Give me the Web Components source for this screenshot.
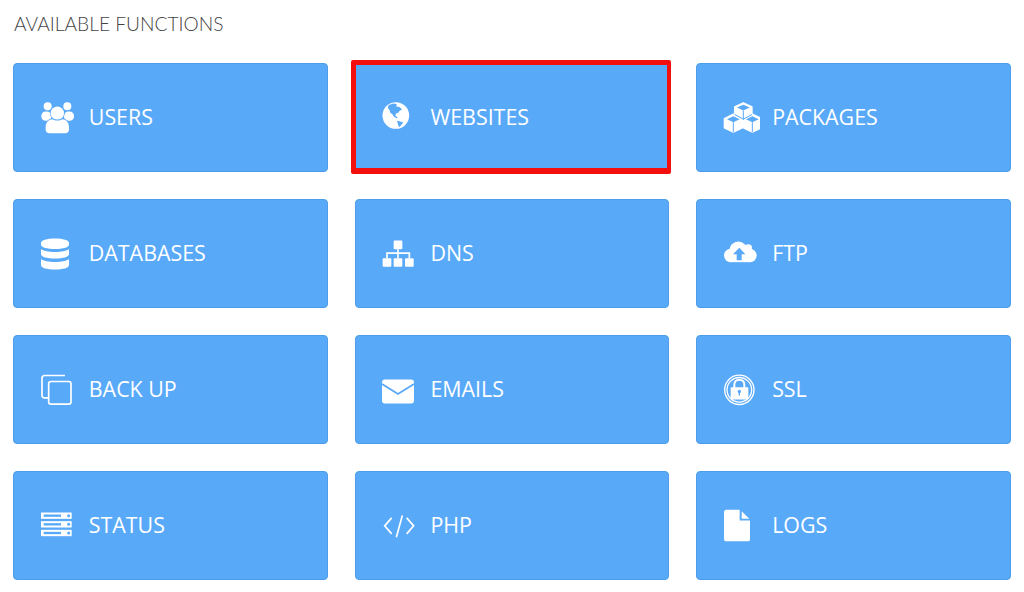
<!DOCTYPE html>
<html lang="en">
<head>
<meta charset="utf-8">
<title>Available functions</title>
<style>
  body { margin: 0; background: #fff; }
  svg { display: block; width: 40px; height: 40px; }
</style>
</head>
<body>
<panel-funciones titulo="AVAILABLE FUNCTIONS"></panel-funciones>
<script>
// Panel with the section heading and the three-column grid
class PanelFunciones extends HTMLElement {
  constructor() {
    super();
    this.attachShadow({ mode: 'open' });
    this.shadowRoot.innerHTML = `
      <style>
        :host { display: block; padding: 14px 13px 0; font-family: "Open Sans", sans-serif; }
        h2 {
          margin: 0 0 29px 1px;
          font: 300 19.2px/20px Lato, sans-serif;
          color: #444;
        }
        .rejilla { display: grid; grid-template-columns: repeat(3, 1fr); gap: 27px; }
      </style>
      <h2></h2>
      <div class="rejilla"><slot></slot></div>`;
    this.shadowRoot.querySelector('h2').textContent = this.getAttribute('titulo');
  }
}

// One blue tile: icon on the left, label after it
class TarjetaFuncion extends HTMLElement {
  constructor() {
    super();
    this.attachShadow({ mode: 'open' });
    this.shadowRoot.innerHTML = `
      <style>
        :host {
          position: relative;
          display: flex;
          align-items: center;
          box-sizing: border-box;
          height: 109px;
          padding-left: 23px;
          background: #59a9f9;
          border: 1px solid #4e9ded;
          border-radius: 4px;
          color: #fff;
          font-size: 21.4px;
        }
        /* red annotation drawn over the tile edge */
        :host([marcado])::after {
          content: "";
          position: absolute;
          top: -4.5px; left: -4.7px; right: -2.7px; bottom: -3px;
          border: solid #f40f0f;
          border-width: 5px 4.5px 6px 5px;
          border-radius: 2px;
        }
        .icono { flex: none; width: 40px; height: 40px; margin-right: 11.8px; }
        .texto { position: relative; top: -1px; }
      </style>
      <div class="icono"><slot name="icono"></slot></div>
      <span class="texto"><slot></slot></span>`;
  }
}

customElements.define('panel-funciones', PanelFunciones);
customElements.define('tarjeta-funcion', TarjetaFuncion);

const iconos = {
  users: `<svg slot="icono" viewBox="36 22.5 120 120" fill="#fff">
    <circle cx="68" cy="47" r="12"/><circle cx="127" cy="47" r="12"/>
    <rect x="49" y="63" width="30" height="28" rx="13"/><rect x="117" y="63" width="30" height="28" rx="13"/>
    <g stroke="#59a9f9" stroke-width="4" paint-order="stroke">
      <circle cx="97" cy="68" r="20"/>
      <path d="M62 110c0-16 10-24 20-24 8 5 22 5 30 0 10 0 20 8 20 24v8c0 6-4 10-10 10H72c-6 0-10-4-10-10z"/>
    </g></svg>`,
  websites: `<svg slot="icono" viewBox="12 7.5 120 120">
    <circle cx="62.5" cy="60" r="40" fill="#fff"/>
    <path fill="#59a9f9" d="M40 30c5-3 11-6 18-6l8 3-3 5 12 3 6 8-7 3-4 6-7 2-2 7 7 5-3 2-8-4-5-8-6-4-2-8-5-6z"/>
    <path fill="#59a9f9" d="M66 76l10 2 9 3-7 8-6 6-3-8z"/>
    </svg>`,
  packages: `<svg slot="icono" viewBox="30 22.5 120 120">
    <g fill="#fff" stroke="#fff" stroke-width="4" stroke-linejoin="round">
      <path d="M100 37l26 12v28l-26 12-26-12V49z"/>
      <path d="M70 71l27 13v28l-27 13-27-13V84z"/>
      <path d="M127 71l27 13v28l-27 13-27-13V84z"/>
    </g>
    <g fill="#59a9f9">
      <path d="M100 43l19 8-19 9-19-9z"/>
      <path d="M70 77l19 9-19 9-19-9z"/>
      <path d="M127 77l19 9-19 9-19-9z"/>
    </g>
    <g fill="none" stroke="#59a9f9" stroke-width="3">
      <path d="M100 60v28M70 95v30M127 95v30"/>
      <path d="M74 72l26 14 26-14"/>
    </g></svg>`,
  databases: `<svg slot="icono" viewBox="0 0 40 40" fill="#fff">
    <path d="M4 9c0-3 6-4.500 14-4.500S32 6 32 9v1.500c0 3-6 4.500-14 4.500S4 13.500 4 10.500z"/>
    <path d="M4 15c2 2 8 3 14 3s12-1 14-3v5c0 3-6 4.500-14 4.500S4 23 4 20z"/>
    <path d="M4 25c2 2 8 3 14 3s12-1 14-3v6c0 3-6 4.500-14 4.500S4 34 4 31z"/>
    </svg>`,
  dns: `<svg slot="icono" viewBox="27 10.5 120 120" fill="#fff">
    <rect x="71" y="30" width="26" height="26" rx="3"/>
    <rect x="38" y="83" width="26" height="26" rx="3"/>
    <rect x="71" y="83" width="26" height="26" rx="3"/>
    <rect x="105" y="83" width="26" height="26" rx="3"/>
    <path fill="none" stroke="#fff" stroke-width="5" d="M84 56v27M51 83V68h67v15"/>
    </svg>`,
  ftp: `<svg slot="icono" viewBox="15 10.5 120 120">
    <g fill="#fff">
      <circle cx="47" cy="75" r="20"/>
      <circle cx="70" cy="60" r="27"/>
      <circle cx="100" cy="52" r="11"/>
      <circle cx="105" cy="75" r="20"/>
      <rect x="47" y="65" width="58" height="30"/>
    </g>
    <path fill="#59a9f9" d="M73 52l18 19H80v18H65V71H54z"/>
    </svg>`,
  backup: `<svg slot="icono" viewBox="21 13.5 120 120" fill="none" stroke="#fff" stroke-width="5">
    <rect x="56" y="48" width="67" height="68" rx="7"/>
    <path d="M105 30H44c-5 0-8 3-8 8v52c0 4 3 7 8 7h11"/>
    </svg>`,
  emails: `<svg slot="icono" viewBox="0 0 40 40">
    <rect x="3" y="9.500" width="32" height="24" rx="3" fill="#fff"/>
    <path fill="none" stroke="#59a9f9" stroke-width="1.800" d="M3 14l16 10 16-10"/>
    </svg>`,
  ssl: `<svg slot="icono" viewBox="15 13.500 120 120">
    <circle cx="73" cy="73" r="44" fill="none" stroke="#fff" stroke-width="4"/>
    <circle cx="73" cy="73" r="37" fill="none" stroke="#fff" stroke-width="4"/>
    <path fill="none" stroke="#fff" stroke-width="6" d="M58 68V58c0-10 7-15 15-15s15 5 15 15v10"/>
    <rect x="47" y="65" width="53" height="37" rx="3" fill="#fff"/>
    <circle cx="73" cy="78" r="5" fill="#59a9f9"/>
    <rect x="71" y="78" width="4" height="12" fill="#59a9f9"/>
    </svg>`,
  status: `<svg slot="icono" viewBox="21 16.500 120 120" fill="#fff">
    <rect x="33" y="36" width="92" height="19"/><rect x="33" y="62" width="92" height="19"/><rect x="33" y="88" width="92" height="19"/>
    <g fill="#59a9f9">
      <rect x="41" y="42" width="52" height="7"/><rect x="41" y="68" width="52" height="7"/><rect x="41" y="94" width="52" height="7"/>
      <circle cx="116" cy="45.500" r="4.500"/><circle cx="116" cy="71.500" r="4.500"/><circle cx="116" cy="97.500" r="4.500"/>
    </g></svg>`,
  php: `<svg slot="icono" viewBox="12 16.500 120 120" fill="none" stroke="#fff" stroke-width="5">
    <path d="M50 52L29 76l21 24M95 52l21 24-21 24M82 45L64 110"/>
    </svg>`,
  logs: `<svg slot="icono" viewBox="15 16.500 120 120" fill="#fff">
    <path d="M34 28h40v32h31v56c0 4-2 6-6 6H34c-4 0-7-2-7-6V35c0-4 3-7 7-7z"/>
    <path d="M80 32l23 23H80z"/>
    </svg>`
};

// Tiles in reading order, the second one carries the red mark
const funciones = [
  ['users', 'USERS'], ['websites', 'WEBSITES', true], ['packages', 'PACKAGES'],
  ['databases', 'DATABASES'], ['dns', 'DNS'], ['ftp', 'FTP'],
  ['backup', 'BACK UP'], ['emails', 'EMAILS'], ['ssl', 'SSL'],
  ['status', 'STATUS'], ['php', 'PHP'], ['logs', 'LOGS']
];

const panel = document.querySelector('panel-funciones');
panel.innerHTML = funciones.map(([icono, texto, marcado]) =>
  `<tarjeta-funcion${marcado ? ' marcado' : ''}>${iconos[icono]}${texto}</tarjeta-funcion>`).join('');
</script>
</body>
</html>
